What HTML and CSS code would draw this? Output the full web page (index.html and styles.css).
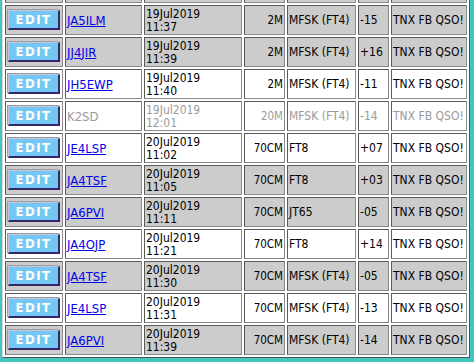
FILE: index.html
```html
<!DOCTYPE html>
<html>
<head>
<meta charset="utf-8">
<link rel="stylesheet" href="styles.css">
</head>
<body>
<table class="log">
<tr class="g"><td class="c1"></td><td class="c2"></td><td class="c3"></td><td class="c4"></td><td class="c5"></td><td class="c6"></td><td class="c7"></td></tr>
<tr class="g"><td class="c1"><span class="btn">EDIT</span></td><td class="c2"><a href="#">JA5ILM</a></td><td class="c3">19Jul2019<br>11:37</td><td class="c4">2M</td><td class="c5">MFSK (FT4)</td><td class="c6">-15</td><td class="c7">TNX FB QSO!</td></tr>
<tr class="g"><td class="c1"><span class="btn">EDIT</span></td><td class="c2"><a href="#">JJ4JIR</a></td><td class="c3">19Jul2019<br>11:39</td><td class="c4">2M</td><td class="c5">MFSK (FT4)</td><td class="c6">+16</td><td class="c7">TNX FB QSO!</td></tr>
<tr class="w"><td class="c1"><span class="btn">EDIT</span></td><td class="c2"><a href="#">JH5EWP</a></td><td class="c3">19Jul2019<br>11:40</td><td class="c4">2M</td><td class="c5">MFSK (FT4)</td><td class="c6">-11</td><td class="c7">TNX FB QSO!</td></tr>
<tr class="w dim"><td class="c1"><span class="btn">EDIT</span></td><td class="c2">K2SD</td><td class="c3">19Jul2019<br>12:01</td><td class="c4">20M</td><td class="c5">MFSK (FT4)</td><td class="c6">-14</td><td class="c7">TNX FB QSO!</td></tr>
<tr class="w"><td class="c1"><span class="btn">EDIT</span></td><td class="c2"><a href="#">JE4LSP</a></td><td class="c3">20Jul2019<br>11:02</td><td class="c4">70CM</td><td class="c5">FT8</td><td class="c6">+07</td><td class="c7">TNX FB QSO!</td></tr>
<tr class="g"><td class="c1"><span class="btn">EDIT</span></td><td class="c2"><a href="#">JA4TSF</a></td><td class="c3">20Jul2019<br>11:05</td><td class="c4">70CM</td><td class="c5">FT8</td><td class="c6">+03</td><td class="c7">TNX FB QSO!</td></tr>
<tr class="g"><td class="c1"><span class="btn">EDIT</span></td><td class="c2"><a href="#">JA6PVI</a></td><td class="c3">20Jul2019<br>11:11</td><td class="c4">70CM</td><td class="c5">JT65</td><td class="c6">-05</td><td class="c7">TNX FB QSO!</td></tr>
<tr class="w"><td class="c1"><span class="btn">EDIT</span></td><td class="c2"><a href="#">JA4OJP</a></td><td class="c3">20Jul2019<br>11:21</td><td class="c4">70CM</td><td class="c5">FT8</td><td class="c6">+14</td><td class="c7">TNX FB QSO!</td></tr>
<tr class="g"><td class="c1"><span class="btn">EDIT</span></td><td class="c2"><a href="#">JA4TSF</a></td><td class="c3">20Jul2019<br>11:30</td><td class="c4">70CM</td><td class="c5">MFSK (FT4)</td><td class="c6">-05</td><td class="c7">TNX FB QSO!</td></tr>
<tr class="w"><td class="c1"><span class="btn">EDIT</span></td><td class="c2"><a href="#">JE4LSP</a></td><td class="c3">20Jul2019<br>11:31</td><td class="c4">70CM</td><td class="c5">MFSK (FT4)</td><td class="c6">-13</td><td class="c7">TNX FB QSO!</td></tr>
<tr class="g"><td class="c1"><span class="btn">EDIT</span></td><td class="c2"><a href="#">JA6PVI</a></td><td class="c3">20Jul2019<br>11:39</td><td class="c4">70CM</td><td class="c5">MFSK (FT4)</td><td class="c6">-14</td><td class="c7">TNX FB QSO!</td></tr>
</table>
</body>
</html>
```
FILE: styles.css
```css
html, body {
  margin: 0;
  padding: 0;
  background: #40c8c0;
  overflow: hidden;
}
.log {
  width: 468px;
  margin: -30px 0 0 2px;
  border-collapse: separate;
  border-spacing: 2px;
  background: #ffffff;
  border: 1px solid;
  border-color: #d8d8d8 #505050 #505050 #d8d8d8;
  table-layout: fixed;
  font-family: "DejaVu Sans Condensed", "DejaVu Sans", sans-serif;
  font-stretch: condensed;
  font-size: 12px;
  color: #000;
}
.log td {
  box-sizing: border-box;
  height: 30px;
  padding: 1px;
  border: 1px solid;
  border-color: #5a5a5a #8a8a8a #8a8a8a #5a5a5a;
  line-height: 13px;
  vertical-align: middle;
  white-space: nowrap;
  overflow: hidden;
}
.g td { background: #cccccc; }
.w td { background: #ffffff; }
.dim td { color: #9a9a9a; }
.c1 { width: 58px; }
.c2 { width: 77px; font-size: 13px; }
.log .c3 { width: 98px; font-size: 12px; padding: 2px 1px 0 1px; }
.c4 { width: 41px; text-align: right; font-size: 11.5px; }
.c5 { width: 69px; }
.c6 { width: 31px; }
.c7 { width: 76px; }
.log a { color: #0000ee; text-decoration: underline; }
.btn {
  display: block;
  box-sizing: border-box;
  width: 52px;
  height: 20px;
  margin-left: 1px;
  background: #76c6f4;
  border-style: solid;
  border-width: 1px 2px 2px 1px;
  border-color: #c8c8d4 #35286a #35286a #c8c8d4;
  box-shadow: -1px -1px 0 #9a9aa8;
  color: #ffffff;
  font-family: "DejaVu Sans Condensed", "DejaVu Sans", sans-serif;
  font-stretch: condensed;
  font-weight: bold;
  font-size: 13px;
  letter-spacing: 1.5px;
  line-height: 17px;
  text-align: center;
}
```
